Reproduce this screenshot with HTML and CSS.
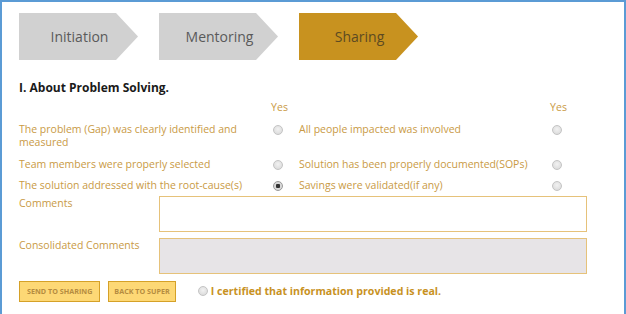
FILE: index.html
```html
<!DOCTYPE html>
<html>
<head>
<meta charset="utf-8">
<link rel="stylesheet" href="styles.css">
</head>
<body>
<div class="frame">
  <div class="steps">
    <div class="step">Initiation</div>
    <div class="step">Mentoring</div>
    <div class="step active">Sharing</div>
  </div>
  <h2 class="title">I. About Problem Solving.</h2>
  <div class="qgrid">
    <div></div><div class="yes">Yes</div><div></div><div></div><div class="yes">Yes</div>
    <div class="q">The problem (Gap) was clearly identified and measured</div><div class="rc"><span class="radio"></span></div><div></div>
    <div class="q">All people impacted was involved</div><div class="rc"><span class="radio"></span></div>
    <div class="q">Team members were properly selected</div><div class="rc"><span class="radio"></span></div><div></div>
    <div class="q">Solution has been properly documented(SOPs)</div><div class="rc"><span class="radio"></span></div>
    <div class="q">The solution addressed with the root-cause(s)</div><div class="rc"><span class="radio checked"></span></div><div></div>
    <div class="q">Savings were validated(if any)</div><div class="rc"><span class="radio"></span></div>
  </div>
  <div class="field">
    <div class="flabel">Comments</div>
    <div class="box"></div>
  </div>
  <div class="field">
    <div class="flabel">Consolidated Comments</div>
    <div class="box disabled"></div>
  </div>
  <div class="actions">
    <button class="btn">SEND TO SHARING</button>
    <button class="btn">BACK TO SUPER</button>
    <span class="radio cert"></span>
    <span class="certtext">I certified that information provided is real.</span>
  </div>
</div>
</body>
</html>
```
FILE: styles.css
```css
html, body { margin: 0; padding: 0; background: #fff; }
body { font-family: "Open Sans", "Noto Sans", sans-serif; }
.frame {
  width: 626px;
  height: 320px;
  border: 2px solid #5b9bd5;
  border-bottom: none;
  padding: 11px 0 0 17px;
  box-sizing: border-box;
}
.steps { display: flex; gap: 21px; }
.step {
  width: 119px;
  height: 47px;
  background: #d1d1d1;
  clip-path: polygon(0 0, 97px 0, 119px 50%, 97px 100%, 0 100%);
  display: flex;
  align-items: center;
  justify-content: center;
  color: #5a5a5a;
  font-size: 14px;
  padding-left: 2px;
  box-sizing: border-box;
}
.step.active { background: #c8921f; color: #5c4a22; }
.title {
  margin: 20px 0 0 0;
  font-size: 12px;
  font-weight: 700;
  color: #1a1a1a;
  line-height: 16px;
}
.qgrid {
  display: grid;
  grid-template-columns: 246px 26px 8px 245px 26px;
  row-gap: 8px;
  margin-top: 5px;
  font-size: 10.5px;
  line-height: 13.5px;
}
.yes { color: #c99a45; text-align: center; padding-left: 3px; }
.q { color: #c99a45; }
.rc { display: flex; justify-content: center; padding-top: 2px; }
.radio {
  display: inline-block;
  width: 8px;
  height: 8px;
  border-radius: 50%;
  border: 1px solid #c4c4c4;
  background: radial-gradient(circle at 50% 40%, #f2f2f2, #d6d6d6);
  box-sizing: content-box;
}
.radio.checked {
  background: radial-gradient(circle, #333 0 2px, #d8d8d8 2.5px);
  border-color: #9a9a9a;
}
.field { display: flex; margin-top: 6px; }
.qgrid + .field { margin-top: 3px; }
.flabel {
  width: 140px;
  color: #c99a45;
  font-size: 10.5px;
  line-height: 14px;
}
.box {
  width: 428px;
  height: 36px;
  border: 1px solid #e6c27a;
  box-sizing: border-box;
  background: #fff;
}
.box.disabled { background: #e7e4e7; }
.actions { display: flex; align-items: center; margin-top: 7px; }
.btn {
  height: 21px;
  padding: 0 7px;
  background: #fdd875;
  border: 1px solid #d5a128;
  color: #b58c40;
  font-family: "Open Sans", sans-serif;
  font-size: 7.2px;
  font-weight: 700;
  margin: 0 8px 0 0;
  cursor: pointer;
}
.btn + .btn { padding: 0 5px; margin-right: 22px; }
.radio.cert { margin-right: 3px; }
.certtext {
  color: #c8921f;
  font-weight: 700;
  font-size: 10.6px;
}
```
